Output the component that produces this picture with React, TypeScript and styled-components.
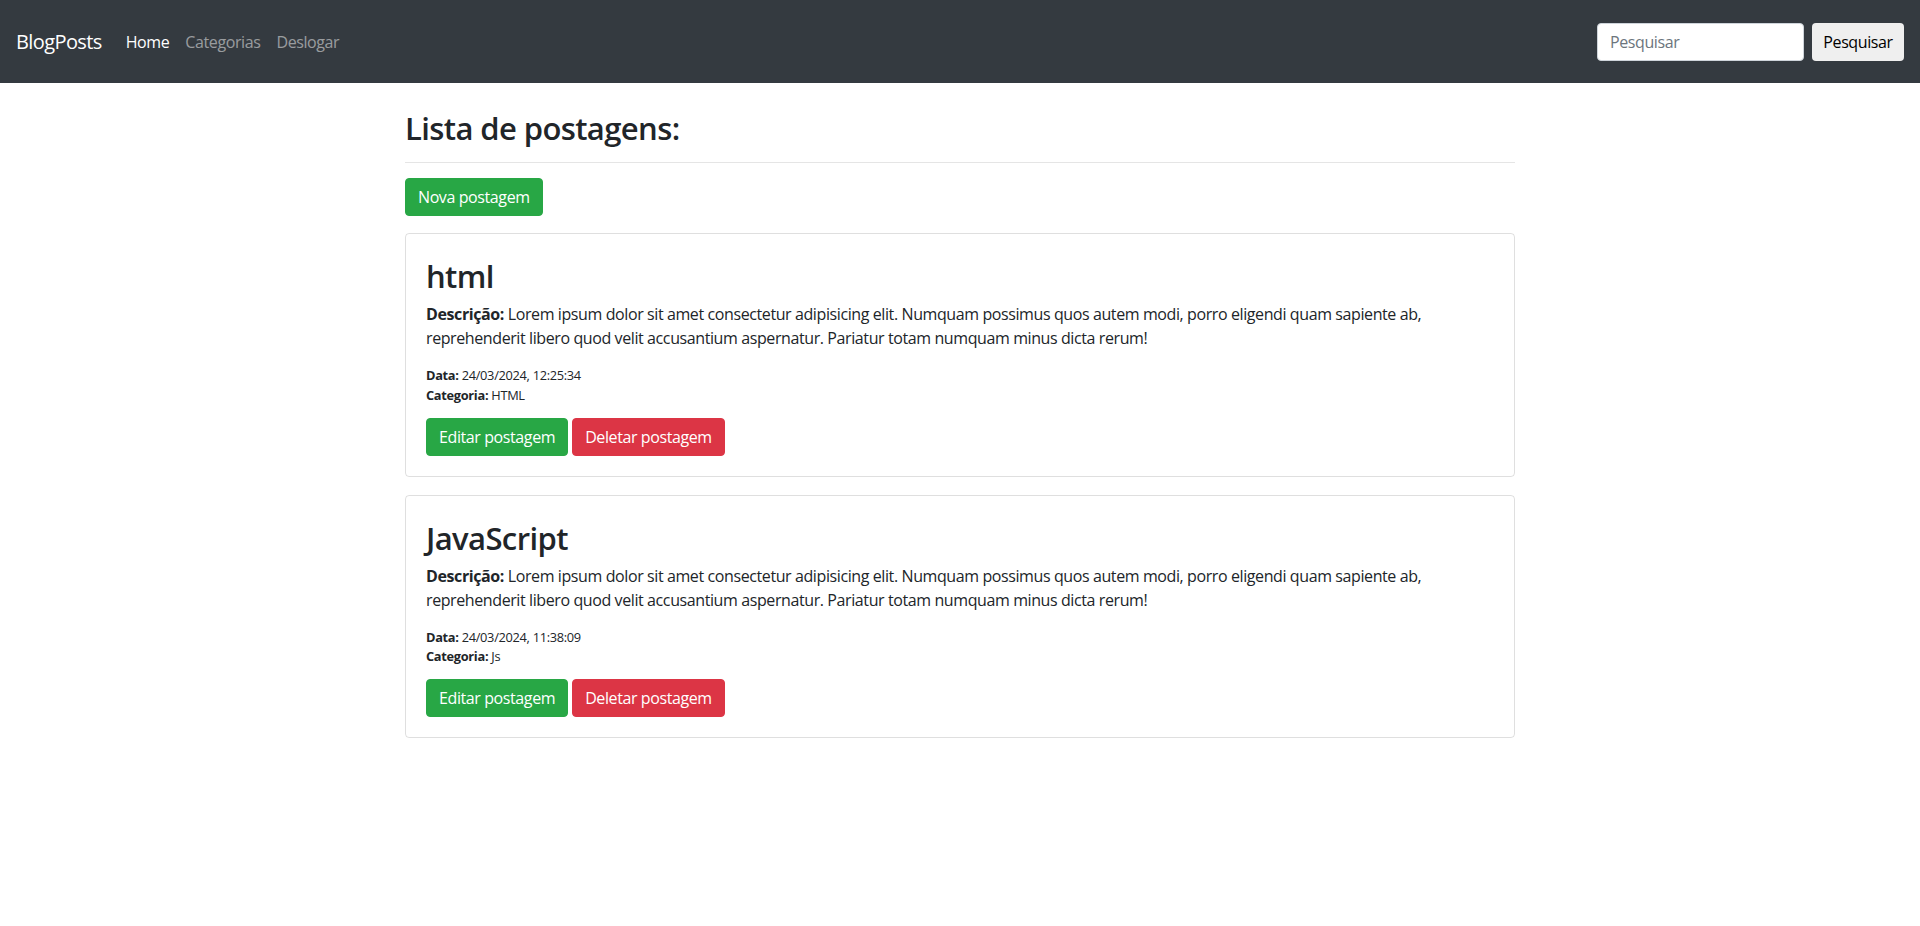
import React from "react";
import styled, { createGlobalStyle } from "styled-components";

const Global = createGlobalStyle`
  html, body { margin: 0; padding: 0; background: #fff; }
  body {
    font-family: "Open Sans", "Noto Sans", sans-serif;
    font-size: 16px;
    line-height: 1.5;
    color: #212529;
    letter-spacing: -0.4px;
  }
  * { box-sizing: border-box; }
`;

const Navbar = styled.nav`
  height: 83px;
  background: #343a40;
  display: flex;
  align-items: center;
  justify-content: space-between;
  padding: 0 16px 0 16px;
`;

const Left = styled.div`
  display: flex;
  align-items: center;
`;

const Brand = styled.a`
  font-size: 20px;
  color: #fff;
  margin-right: 16px;
  line-height: 30px;
  letter-spacing: -0.6px;
`;

const NavLink = styled.a<{ $active?: boolean }>`
  color: ${(p) => (p.$active ? "#fff" : "rgba(255,255,255,0.5)")};
  padding: 8px 8px;
  font-size: 16px;
`;

const SearchForm = styled.form`
  display: flex;
  align-items: center;
  gap: 8px;
`;

const SearchInput = styled.input`
  width: 207px;
  height: 38px;
  padding: 6px 12px;
  font-family: inherit;
  font-size: 16px;
  letter-spacing: -0.4px;
  color: #495057;
  background: #fff;
  border: 1px solid #ced4da;
  border-radius: 4px;
  &::placeholder { color: #6c757d; }
`;

const SearchButton = styled.button`
  height: 38px;
  width: 92px;
  padding: 0;
  font-family: inherit;
  font-size: 16px;
  letter-spacing: -0.4px;
  color: #000;
  background: #efefef;
  border: none;
  border-radius: 4px;
`;

const Container = styled.main`
  width: 1110px;
  margin: 27px auto 0;
`;

const PageTitle = styled.h2`
  margin: 0;
  font-size: 31px;
  font-weight: 600;
  letter-spacing: -0.6px;
  line-height: 1.2;
`;

const Rule = styled.hr`
  margin: 15px 0 15px;
  border: 0;
  border-top: 1px solid rgba(0, 0, 0, 0.1);
`;

const Button = styled.a<{ $variant: "success" | "danger" }>`
  display: inline-block;
  padding: 6px 12px;
  font-size: 16px;
  line-height: 24px;
  color: #fff;
  border-radius: 4px;
  background: ${(p) => (p.$variant === "success" ? "#28a745" : "#dc3545")};
  border: 1px solid ${(p) => (p.$variant === "success" ? "#28a745" : "#dc3545")};
  text-decoration: none;
  cursor: pointer;
`;

const TopAction = styled.div`
  margin-bottom: 17px;
  display: flex;
`;

const CardList = styled.div`
  display: flex;
  flex-direction: column;
  gap: 18px;
`;

const Card = styled.article`
  border: 1px solid rgba(0, 0, 0, 0.125);
  border-radius: 4px;
  padding: 23px 20px 20px;
`;

const CardTitle = styled.h2`
  margin: 1px 0 7px;
  font-size: 31px;
  font-weight: 600;
  letter-spacing: -0.6px;
  line-height: 1.2;
`;

const Description = styled.p`
  margin: 0 0 16px;
`;

const Meta = styled.p`
  margin: 0 0 13px;
  font-size: 12.8px;
  line-height: 19.2px;
  letter-spacing: -0.3px;
`;

const Actions = styled.div`
  display: flex;
  gap: 4px;
`;

const posts = [
  { title: "html", date: "24/03/2024, 12:25:34", category: "HTML" },
  { title: "JavaScript", date: "24/03/2024, 11:38:09", category: "Js" },
];

const lorem =
  "Lorem ipsum dolor sit amet consectetur adipisicing elit. Numquam possimus quos autem modi, porro eligendi quam sapiente ab, reprehenderit libero quod velit accusantium aspernatur. Pariatur totam numquam minus dicta rerum!";

export default function App() {
  return (
    <>
      <Global />
      <Navbar>
        <Left>
          <Brand>BlogPosts</Brand>
          <NavLink $active>Home</NavLink>
          <NavLink>Categorias</NavLink>
          <NavLink>Deslogar</NavLink>
        </Left>
        <SearchForm onSubmit={(e) => e.preventDefault()}>
          <SearchInput placeholder="Pesquisar" />
          <SearchButton type="submit">Pesquisar</SearchButton>
        </SearchForm>
      </Navbar>
      <Container>
        <PageTitle>Lista de postagens:</PageTitle>
        <Rule />
        <TopAction>
          <Button $variant="success">Nova postagem</Button>
        </TopAction>
        <CardList>
          {posts.map((p) => (
            <Card key={p.title}>
              <CardTitle>{p.title}</CardTitle>
              <Description>
                <b>Descrição:</b> {lorem}
              </Description>
              <Meta>
                <b>Data:</b> {p.date}
                <br />
                <b>Categoria:</b> {p.category}
              </Meta>
              <Actions>
                <Button $variant="success">Editar postagem</Button>
                <Button $variant="danger">Deletar postagem</Button>
              </Actions>
            </Card>
          ))}
        </CardList>
      </Container>
    </>
  );
}
